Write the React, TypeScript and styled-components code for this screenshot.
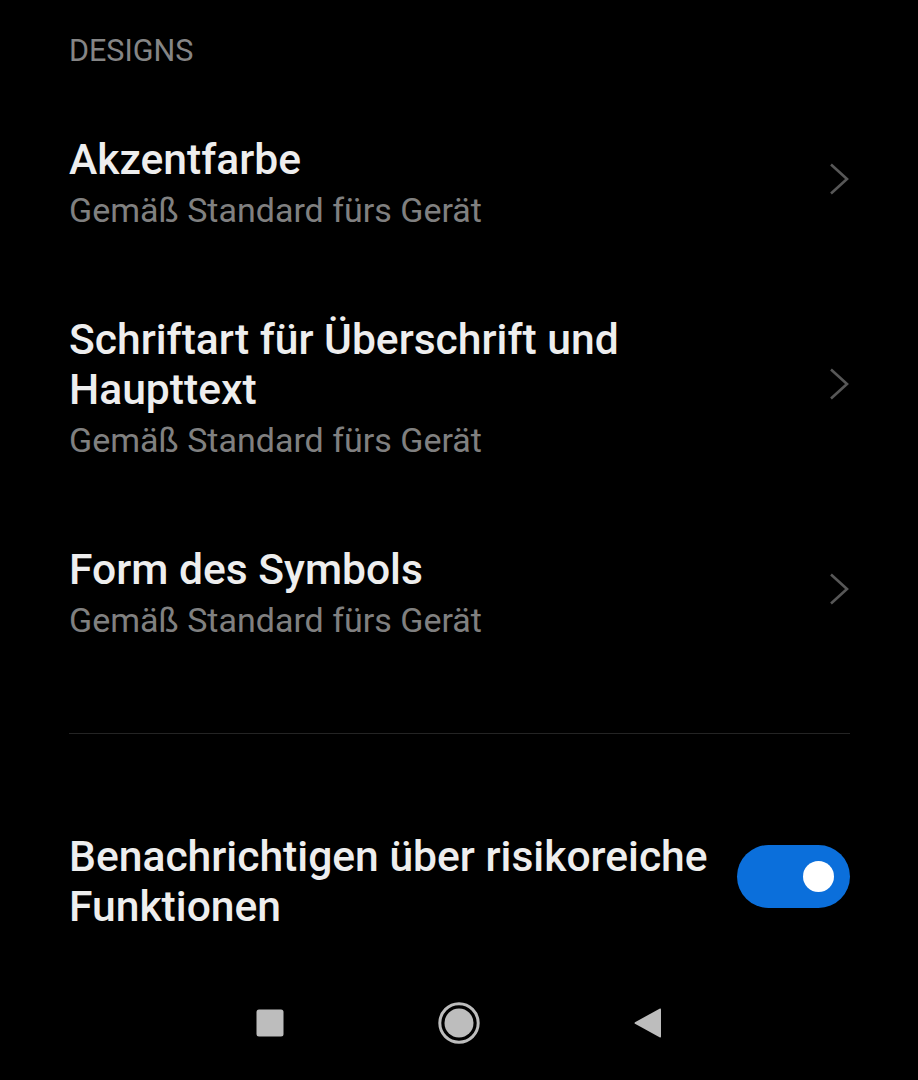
import React from "react";
import styled, { createGlobalStyle } from "styled-components";

const Global = createGlobalStyle`
  html, body {
    margin: 0;
    padding: 0;
    background: #000;
  }
  body {
    font-family: Roboto, "Noto Sans", "Liberation Sans", sans-serif;
    -webkit-font-smoothing: antialiased;
  }
`;

const Page = styled.div`
  width: 918px;
  min-height: 1080px;
  background: #000;
  display: flex;
  flex-direction: column;
  box-sizing: border-box;
  padding: 31px 68px 0 69px;
`;

const SectionHeader = styled.div`
  font-size: 30.5px;
  line-height: 40px;
  color: #858585;
  text-transform: uppercase;
  padding-bottom: 22px;
`;

const Item = styled.div`
  display: flex;
  align-items: center;
  gap: 54px;
  padding: 41px 0 40px;
`;

const TextCol = styled.div`
  flex: 1;
  min-width: 0;
  display: flex;
  flex-direction: column;
`;

const Title = styled.div`
  font-size: 42.6px;
  font-weight: 500;
  line-height: 50px;
  color: #eeeeee;
`;

const Subtitle = styled.div`
  margin-top: 3px;
  font-size: 34px;
  line-height: 46px;
  color: #808080;
`;

const ChevronBox = styled.div`
  width: 21px;
  display: flex;
  justify-content: flex-end;
  margin-bottom: 9px;
`;

const Divider = styled.div`
  height: 1px;
  background: #242424;
  margin: 50px 0 57px;
`;

const ToggleRow = styled.div`
  display: flex;
  align-items: center;
  gap: 18px;
  padding: 40px 0;
`;

const Switch = styled.div<{ $on: boolean }>`
  flex: none;
  width: 113px;
  height: 63px;
  border-radius: 32px;
  margin-bottom: 10px;
  background: ${(p) => (p.$on ? "#0b6fdb" : "#444")};
  display: flex;
  align-items: center;
  justify-content: ${(p) => (p.$on ? "flex-end" : "flex-start")};
  padding: 0 16px;
  box-sizing: border-box;
`;

const Knob = styled.div`
  width: 31px;
  height: 31px;
  border-radius: 50%;
  background: #ffffff;
`;

const NavBar = styled.div`
  height: 104px;
  margin: 0 -68px 0 -69px;
  display: flex;
  align-items: center;
  justify-content: center;
  gap: 145px;
`;

const NavButton = styled.div`
  width: 44px;
  height: 44px;
  display: flex;
  align-items: center;
  justify-content: center;
`;

const Chevron = () => (
  <svg width="21" height="32" viewBox="0 0 21 32">
    <polyline
      points="2,1.5 18,16 2,30.5"
      fill="none"
      stroke="#575757"
      strokeWidth="2.6"
      strokeLinejoin="miter"
    />
  </svg>
);

const settings = [
  { title: "Akzentfarbe", sub: "Gemäß Standard fürs Gerät" },
  {
    title: "Schriftart für Überschrift und Haupttext",
    sub: "Gemäß Standard fürs Gerät",
  },
  { title: "Form des Symbols", sub: "Gemäß Standard fürs Gerät" },
];

export default function App() {
  return (
    <>
      <Global />
      <Page>
        <SectionHeader>Designs</SectionHeader>
        {settings.map((s, i) => (
          <Item key={i}>
            <TextCol>
              <Title>{s.title}</Title>
              <Subtitle>{s.sub}</Subtitle>
            </TextCol>
            <ChevronBox>
              <Chevron />
            </ChevronBox>
          </Item>
        ))}
        <Divider />
        <ToggleRow>
          <TextCol>
            <Title>Benachrichtigen über risikoreiche Funktionen</Title>
          </TextCol>
          <Switch $on>
            <Knob />
          </Switch>
        </ToggleRow>
        <NavBar>
          <NavButton>
            <svg width="28" height="28" viewBox="0 0 28 28">
              <rect x="0.5" y="0.5" width="27" height="27" rx="2.5" fill="#bdbdbd" />
            </svg>
          </NavButton>
          <NavButton>
            <svg width="44" height="44" viewBox="0 0 44 44">
              <circle cx="22" cy="22" r="19.2" fill="none" stroke="#bdbdbd" strokeWidth="3" />
              <circle cx="22" cy="22" r="14.5" fill="#bdbdbd" />
            </svg>
          </NavButton>
          <NavButton>
            <svg width="30" height="32" viewBox="0 0 30 32">
              <path
                d="M27 1.5 Q28 1.2 28 2.5 L28 29.5 Q28 30.8 27 30.5 L2 16.8 Q1 16 2 15.2 Z"
                fill="#bdbdbd"
              />
            </svg>
          </NavButton>
        </NavBar>
      </Page>
    </>
  );
}
